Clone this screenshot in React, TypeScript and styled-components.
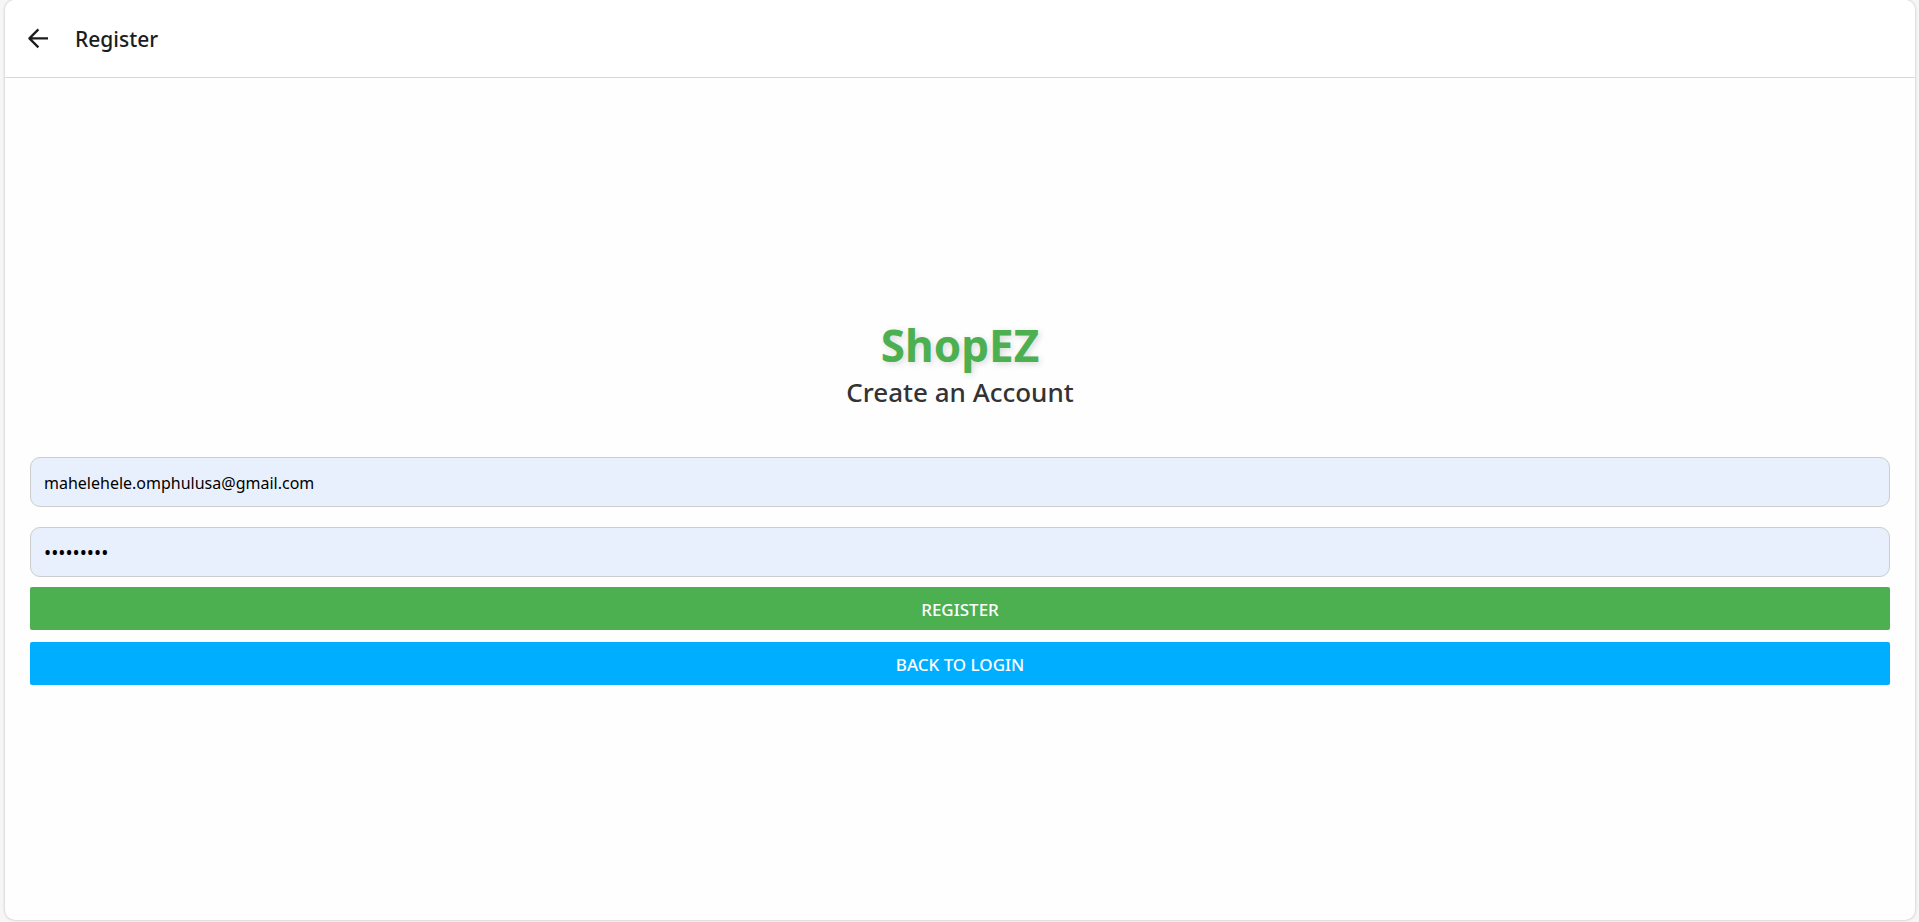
import React from "react";
import styled, { createGlobalStyle } from "styled-components";

const GlobalStyle = createGlobalStyle`
  * { box-sizing: border-box; }
  html, body, #root { height: 100%; }
  body {
    margin: 0;
    background: #f6f6f6;
    font-family: "Segoe UI", "Noto Sans", "Open Sans", sans-serif;
    overflow: hidden;
  }
`;

const Screen = styled.div`
  height: 100%;
  padding: 0 4px 2px 5px;
`;

const Card = styled.div`
  display: flex;
  flex-direction: column;
  height: 100%;
  overflow: hidden;
  background: #fefefe;
  border-radius: 10px;
  box-shadow: 0 0 3px rgba(0, 0, 0, 0.25);
`;

const Header = styled.header`
  display: flex;
  align-items: center;
  gap: 20px;
  height: 78px;
  padding: 0 16px;
  background: #fff;
  border-bottom: 1px solid #d8d8d8;
`;

const BackButton = styled.button`
  display: flex;
  align-items: center;
  justify-content: center;
  width: 34px;
  height: 34px;
  padding: 0;
  border: 0;
  background: transparent;
  color: #1c1c1e;
  cursor: pointer;
`;

const HeaderTitle = styled.h1`
  margin: 0;
  color: #1c1c1e;
  font-size: 21px;
  font-weight: 500;
  line-height: 28px;
`;

const Form = styled.form`
  display: flex;
  flex: 1;
  flex-direction: column;
  justify-content: center;
  padding: 0 25px 2px;
`;

const Brand = styled.div`
  padding-top: 4px;
  color: #4caf50;
  font-size: 44px;
  font-weight: 700;
  line-height: 60px;
  text-align: center;
  text-shadow: 2px 2px 6px rgba(0, 0, 0, 0.15);
`;

const Subtitle = styled.h2`
  margin: 0 0 47px;
  color: #333;
  font-size: 26px;
  font-weight: 500;
  line-height: 35px;
  text-align: center;
`;

const Field = styled.input`
  width: 100%;
  height: 50px;
  margin: 0 0 20px;
  padding: 2px 13px 0;
  border: 1px solid #ccc;
  border-radius: 10px;
  outline: 0;
  background: #e8f0fe;
  color: #000;
  font-family: inherit;
  font-size: 16px;

  &[type="password"] {
    margin-bottom: 10px;
    font-size: 19px;
  }
`;

const Action = styled.button<{ $color: string }>`
  width: 100%;
  height: 43px;
  padding: 2px 8px 0;
  border: 0;
  border-radius: 2px;
  background: ${({ $color }) => $color};
  color: #fff;
  font-family: inherit;
  font-size: 17px;
  font-weight: 500;
  text-transform: uppercase;
  cursor: pointer;

  & + & {
    margin-top: 12px;
  }
`;

export default function App() {
  return (
    <>
      <GlobalStyle />
      <Screen>
        <Card>
          <Header>
            <BackButton type="button" aria-label="Back">
              <svg width="24" height="24" viewBox="0 0 24 24" fill="none" stroke="currentColor" strokeWidth="2.3" strokeLinejoin="round">
                <path d="M12.4 2.4 3.4 11.4l9 9M3.4 11.4H22" />
              </svg>
            </BackButton>
            <HeaderTitle>Register</HeaderTitle>
          </Header>
          <Form onSubmit={(event) => event.preventDefault()}>
            <Brand>ShopEZ</Brand>
            <Subtitle>Create an Account</Subtitle>
            <Field type="email" aria-label="Email" defaultValue="mahelehele.omphulusa@gmail.com" />
            <Field type="password" aria-label="Password" defaultValue="shopez123" />
            <Action type="submit" $color="#4caf50">Register</Action>
            <Action type="button" $color="#00aeff">Back to Login</Action>
          </Form>
        </Card>
      </Screen>
    </>
  );
}
